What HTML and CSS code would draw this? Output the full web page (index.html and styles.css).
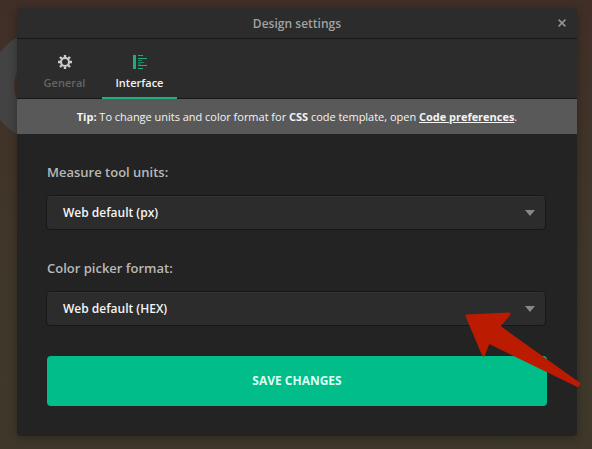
FILE: index.html
```
<!DOCTYPE html>
<html lang="en">
<head>
<meta charset="utf-8">
<title>Design settings</title>
<link rel="stylesheet" href="styles.css">
</head>
<body>
<div class="ring"></div>
<main class="dialog">
  <header class="titlebar">
    <h1 class="title">Design settings</h1>
    <button class="close" aria-label="Close"><svg width="8" height="8" viewBox="0 0 8 8"><path d="M.6.6 7.4 7.4M7.4.6.6 7.4" stroke="#929292" stroke-width="1.7"/></svg></button>
  </header>
  <nav class="tabs">
    <a class="tab">
      <svg width="14" height="14" viewBox="0 0 14 14"><g stroke="#cecece" fill="none"><circle cx="7" cy="7" r="4" stroke-width="2.1"/><path stroke-width="2.4" d="M7 0v2.200M7 11.800V14M0 7h2.200M11.800 7H14M2 2l1.700 1.700M10.300 10.300 12 12M12 2l-1.700 1.700M3.700 10.300 2 12"/></g></svg>
      <span class="tab-name">General</span>
    </a>
    <a class="tab active">
      <svg width="14" height="14" viewBox="0 0 14 14"><path fill="#20aa80" d="M0 0h3v14H0z"/><path stroke="#20aa80" d="M5 .5h5M5 3.500h9M5 10.500h9M5 13.500h5"/><path stroke="#218365" d="M5 5.500h4M5 7.500h6M5 9h3"/></svg>
      <span class="tab-name">Interface</span>
    </a>
  </nav>
  <p class="tip"><span class="tip-text"><b>Tip:</b> To change units and color format for <b>CSS</b> code template, open <a class="link">Code preferences</a>.</span></p>
  <section class="form">
    <div class="label"><span class="measure">Measure tool units:</span></div>
    <div class="select"><span class="px">Web default (px)</span><i class="caret"></i></div>
    <div class="label"><span class="picker">Color picker format:</span></div>
    <div class="select"><span class="hex">Web default (HEX)</span><i class="caret"></i></div>
    <button class="save">SAVE CHANGES</button>
  </section>
</main>
<svg class="arrow" width="120" height="77" viewBox="0 0 120 77"><path d="M2 7 44 5 33.500 17.500 114 75 112.500 76.500 23.500 33 18.500 46Z" transform="translate(0 -1)" fill="#bb1b00" stroke="#bb1b00" stroke-width="3" stroke-linejoin="round"/></svg>
</body>
</html>
```
FILE: styles.css
```
* { box-sizing: border-box; }
body {
  margin: 0;
  width: 592px;
  height: 449px;
  padding: 8px 15px 13px 17px;
  overflow: hidden;
  position: relative;
  background: linear-gradient(#402f27, #40372a 55%, #3e382b);
  font-family: "Open Sans", sans-serif;
  font-size: 12px;
}
button { border: 0; padding: 0; background: none; font: inherit; }
.ring {
  position: absolute;
  left: -11px;
  top: 30px;
  width: 112px;
  height: 112px;
  border: 25px solid #434343;
  border-radius: 50%;
}
.dialog {
  position: relative;
  width: 560px;
  height: 428px;
  border-radius: 4px;
  overflow: hidden;
  background: #232323;
  box-shadow: 0 2px 10px rgba(0, 0, 0, .3);
}
.titlebar {
  height: 31px;
  display: grid;
  grid-template-columns: 30px 1fr 30px;
  align-items: center;
  background: #2c2c2c;
  border-bottom: 1px solid #171717;
}
.title {
  grid-column: 2;
  margin: 2px 0 0;
  font-size: 12px;
  line-height: 16px;
  font-weight: 600;
  letter-spacing: .02px;
  text-align: center;
  color: #a2a2a2;
}
.close { height: 8px; display: flex; padding-left: 11px; }
.tabs {
  height: 60px;
  display: flex;
  padding-left: 10px;
  background: #2c2c2c;
  border-bottom: 1px solid #171717;
}
.tab {
  width: 75px;
  height: 60px;
  display: flex;
  flex-direction: column;
  align-items: center;
  padding-top: 16px;
  font-size: 11px;
  line-height: 16px;
  font-weight: 600;
  color: #656565;
}
.tab-name { margin-top: 6px; }
.active { color: #f0f0f0; border-bottom: 2px solid #20b080; }
.tip {
  height: 35px;
  margin: 0;
  display: flex;
  align-items: center;
  justify-content: center;
  background: #595959;
  color: #f4f4f4;
  font-size: 11px;
  letter-spacing: -.02px;
  white-space: nowrap;
}
.link { font-weight: 700; text-decoration: underline; }
.form { padding: 29px 30px 0; }
.label {
  height: 18px;
  margin-bottom: 14px;
  font-size: 13px;
  line-height: 18px;
  font-weight: 600;
  color: #b9b9b9;
}
.select {
  width: 500px;
  height: 35px;
  margin: 0 0 29px -1px;
  padding: 0 10px 0 16px;
  display: flex;
  align-items: center;
  justify-content: space-between;
  border: 1px solid #171717;
  border-radius: 4px;
  background: #2c2c2c;
  box-shadow: inset 0 1px #343434;
  font-weight: 600;
  color: #f5f5f5;
}
.caret {
  border: 5px solid transparent;
  border-top: 6px solid #888;
  border-bottom: 0;
}
.save {
  display: block;
  width: 500px;
  height: 50px;
  margin-top: 30px;
  padding-bottom: 2px;
  border-radius: 4px;
  background: #00bd89;
  color: #ddfff4;
  font-weight: 700;
}
.arrow { position: absolute; left: 465px; top: 310px; }
```
